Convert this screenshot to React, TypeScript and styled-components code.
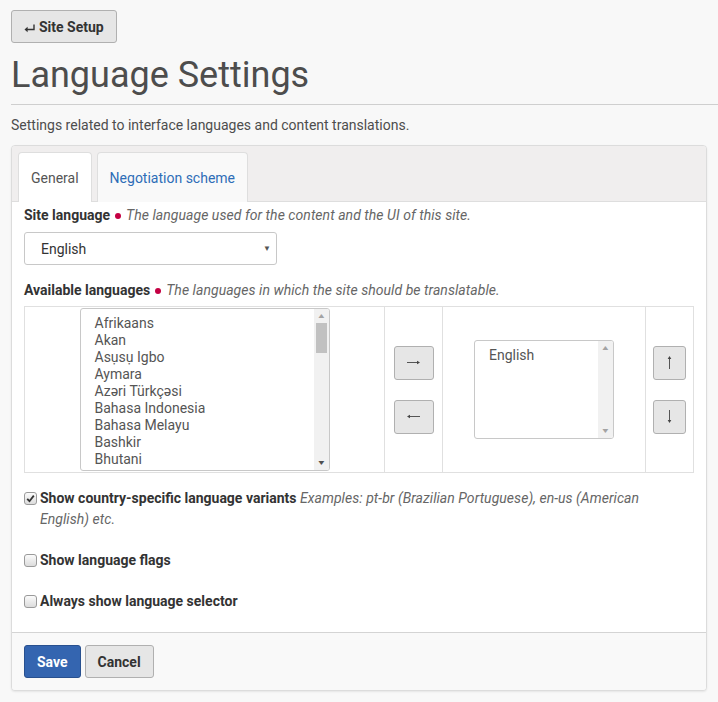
import React, { useState } from 'react';
import styled, { createGlobalStyle } from 'styled-components';

const GlobalStyle = createGlobalStyle`
  html, body {
    margin: 0;
    padding: 0;
    background: #f8f8f8;
    font-family: Roboto, "Liberation Sans", Arial, sans-serif;
    font-size: 14px;
    color: #4d4d4d;
  }
  * { box-sizing: border-box; }
`;

const Page = styled.div`
  padding: 10px 0 11px 11px;
`;

const Button = styled.button<{ variant?: 'primary' | 'default' }>`
  font-family: Roboto, "Liberation Sans", Arial, sans-serif;
  font-size: 14px;
  font-weight: 700;
  height: 33px;
  padding: 0 12px;
  border-radius: 3px;
  cursor: pointer;
  display: inline-flex;
  align-items: center;
  gap: 4px;
  ${p => p.variant === 'primary' ? `
    background: #3465b0;
    border: 1px solid #28508f;
    color: #fff;
  ` : `
    background: #e6e6e6;
    border: 1px solid #b0b0b0;
    color: #333;
  `}
`;

const BackGlyph = styled.span`
  display: flex;
  margin-top: 4px;
`;

const Title = styled.h1`
  font-size: 36px;
  font-weight: 400;
  color: #4d4d4d;
  line-height: 40px;
  margin: 12px 0 0;
`;

const Rule = styled.hr`
  border: 0;
  border-top: 1px solid #cfcfcf;
  margin: 9px 0 0;
`;

const Lead = styled.p`
  margin: 10px 0 0;
  line-height: 20px;
`;

const Panel = styled.div`
  margin: 10px 11px 0 0;
  border: 1px solid #dcdcdc;
  border-radius: 4px;
  background: #f9f9f9;
  box-shadow: 0 1px 2px rgba(0, 0, 0, 0.08);
  overflow: hidden;
`;

const TabBar = styled.div`
  display: flex;
  gap: 5px;
  padding: 6px 6px 0;
  background: #f0eeee;
  border-bottom: 1px solid #dedede;
`;

const Tab = styled.div<{ active?: boolean }>`
  height: 50px;
  padding: 0 12px;
  display: flex;
  align-items: center;
  border: 1px solid #dedede;
  border-bottom: 0;
  border-radius: 4px 4px 0 0;
  margin-bottom: -1px;
  background: ${p => (p.active ? '#fff' : '#f9f9f9')};
  color: ${p => (p.active ? '#555' : '#2e6db7')};
  font-size: 14px;
`;

const Body = styled.div`
  background: #fff;
  padding: 3px 12px 0;
  border-bottom: 1px solid #d4d4d4;
`;

const FieldLabel = styled.div<{ gap?: number }>`
  line-height: 20px;
  margin-top: ${p => p.gap ?? 0}px;
  display: flex;
  align-items: center;
  gap: 4px;
`;

const LabelText = styled.b`
  color: #333;
  font-weight: 700;
`;

const Required = styled.span`
  width: 6px;
  height: 6px;
  border-radius: 50%;
  background: #c40043;
  margin: 1px 1px 0;
`;

const Help = styled.i`
  color: #666;
  letter-spacing: 0.05px;
`;

const Select = styled.div`
  width: 253px;
  height: 33px;
  margin-top: 7px;
  border: 1px solid #c8c8c8;
  border-radius: 3px;
  display: flex;
  align-items: center;
  justify-content: space-between;
  padding: 0 5px 0 16px;
  color: #333;
  background: #fff;
`;

const Caret = styled.span`
  font-size: 8px;
  color: #555;
`;

const Picker = styled.div`
  display: grid;
  grid-template-columns: 360px 58px 203px 1fr;
  margin-top: 6px;
  border: 1px solid #e0e0e0;
  height: 167px;
`;

const Cell = styled.div<{ last?: boolean }>`
  display: flex;
  flex-direction: column;
  align-items: center;
  justify-content: center;
  gap: 20px;
  border-right: ${p => (p.last ? '0' : '1px solid #e0e0e0')};
`;

const ListBox = styled.div<{ w: number; h: number }>`
  width: ${p => p.w}px;
  height: ${p => p.h}px;
  border: 1px solid #c8c8c8;
  border-radius: 3px;
  display: flex;
  overflow: hidden;
  background: #fff;
`;

const Items = styled.div`
  flex: 1;
  padding: 6px 0 0 14px;
  overflow: hidden;
  color: #555;
`;

const Item = styled.div`
  line-height: 17px;
  white-space: nowrap;
`;

const Scrollbar = styled.div`
  width: 15px;
  background: #f1f1f1;
  display: flex;
  flex-direction: column;
  align-items: center;
  justify-content: space-between;
  padding: 3px 0;
`;

const ScrollArrow = styled.span`
  font-size: 7px;
  line-height: 8px;
  color: #a3a3a3;
  transform: scaleX(1.4);
`;

const ScrollArrowDark = styled(ScrollArrow)`
  color: #505050;
`;

const Thumb = styled.div`
  width: 11px;
  height: 30px;
  background: #c1c1c1;
  margin: 3px 0 auto;
`;

const MoveButton = styled.button<{ w: number }>`
  width: ${p => p.w}px;
  height: 34px;
  background: #e6e6e6;
  border: 1px solid #b0b0b0;
  border-radius: 3px;
  padding: 0;
  display: flex;
  align-items: center;
  justify-content: center;
`;

const CheckRow = styled.label<{ gap: number }>`
  display: flex;
  align-items: flex-start;
  gap: 3px;
  margin-top: ${p => p.gap}px;
  padding-right: 8px;
  line-height: 21px;
`;

const Box = styled.span`
  flex: none;
  width: 13px;
  height: 13px;
  margin-top: 4px;
  border: 1px solid #9a9a9a;
  border-radius: 3px;
  background: linear-gradient(#fbfbfb, #dcdcdc);
  display: flex;
  align-items: center;
  justify-content: center;
`;

const Footer = styled.div`
  display: flex;
  gap: 4px;
  padding: 12px;
  background: #f9f9f9;
`;

const Spacer = styled.div`
  height: 20px;
`;

const available = [
  'Afrikaans',
  'Akan',
  'Asụsụ Igbo',
  'Aymara',
  'Azəri Türkçəsi',
  'Bahasa Indonesia',
  'Bahasa Melayu',
  'Bashkir',
  'Bhutani',
  'Bihari',
];

const Check = () => (
  <svg width="9" height="9" viewBox="0 0 9 9">
    <path d="M1.2 4.8 L3.5 7.2 L7.8 1.6" fill="none" stroke="#333" strokeWidth="1.8" />
  </svg>
);

// thin long arrow pointing right, rotated for the other directions
const Arrow = ({ deg }: { deg: number }) => (
  <svg width="15" height="15" viewBox="0 0 15 15" style={{ transform: `rotate(${deg}deg)` }}>
    <path d="M1 7.5 H13" stroke="#444" strokeWidth="0.9" />
    <path d="M11 5.7 L14 7.5 L11 9.3 Z" fill="#444" />
  </svg>
);

const ReturnIcon = () => (
  <svg width="11" height="9" viewBox="0 0 11 9">
    <path d="M10 0.5 V5.5 H2" fill="none" stroke="#333" strokeWidth="1.4" />
    <path d="M0.5 5.5 L3.6 2.8 V8.2 Z" fill="#333" />
  </svg>
);

const App: React.FC = () => {
  const [checks, setChecks] = useState({ variants: true, flags: false, selector: false });
  const toggle = (k: keyof typeof checks) => setChecks({ ...checks, [k]: !checks[k] });

  return (
    <Page>
      <GlobalStyle />
      <Button>
        <BackGlyph>
          <ReturnIcon />
        </BackGlyph>
        Site Setup
      </Button>
      <Title>Language Settings</Title>
      <Rule />
      <Lead>Settings related to interface languages and content translations.</Lead>

      <Panel>
        <TabBar>
          <Tab active>General</Tab>
          <Tab>Negotiation scheme</Tab>
        </TabBar>

        <Body>
          <FieldLabel>
            <LabelText>Site language</LabelText>
            <Required />
            <Help>The language used for the content and the UI of this site.</Help>
          </FieldLabel>
          <Select>
            <span>English</span>
            <Caret>▼</Caret>
          </Select>

          <FieldLabel gap={15}>
            <LabelText>Available languages</LabelText>
            <Required />
            <Help>The languages in which the site should be translatable.</Help>
          </FieldLabel>
          <Picker>
            <Cell>
              <ListBox w={250} h={163}>
                <Items>
                  {available.map(l => (
                    <Item key={l}>{l}</Item>
                  ))}
                </Items>
                <Scrollbar>
                  <ScrollArrow>▲</ScrollArrow>
                  <Thumb />
                  <ScrollArrowDark>▼</ScrollArrowDark>
                </Scrollbar>
              </ListBox>
            </Cell>
            <Cell>
              <MoveButton w={40}><Arrow deg={0} /></MoveButton>
              <MoveButton w={40}><Arrow deg={180} /></MoveButton>
            </Cell>
            <Cell>
              <ListBox w={140} h={99}>
                <Items>
                  <Item>English</Item>
                </Items>
                <Scrollbar>
                  <ScrollArrow>▲</ScrollArrow>
                  <ScrollArrow>▼</ScrollArrow>
                </Scrollbar>
              </ListBox>
            </Cell>
            <Cell last>
              <MoveButton w={33}><Arrow deg={-90} /></MoveButton>
              <MoveButton w={33}><Arrow deg={90} /></MoveButton>
            </Cell>
          </Picker>

          <CheckRow gap={15} onClick={() => toggle('variants')}>
            <Box>{checks.variants && <Check />}</Box>
            <span>
              <LabelText>Show country-specific language variants</LabelText>{' '}
              <Help>Examples: pt-br (Brazilian Portuguese), en-us (American English) etc.</Help>
            </span>
          </CheckRow>
          <CheckRow gap={20} onClick={() => toggle('flags')}>
            <Box>{checks.flags && <Check />}</Box>
            <LabelText>Show language flags</LabelText>
          </CheckRow>
          <CheckRow gap={20} onClick={() => toggle('selector')}>
            <Box>{checks.selector && <Check />}</Box>
            <LabelText>Always show language selector</LabelText>
          </CheckRow>
          <Spacer />
        </Body>

        <Footer>
          <Button variant="primary">Save</Button>
          <Button>Cancel</Button>
        </Footer>
      </Panel>
    </Page>
  );
};

export default App;
